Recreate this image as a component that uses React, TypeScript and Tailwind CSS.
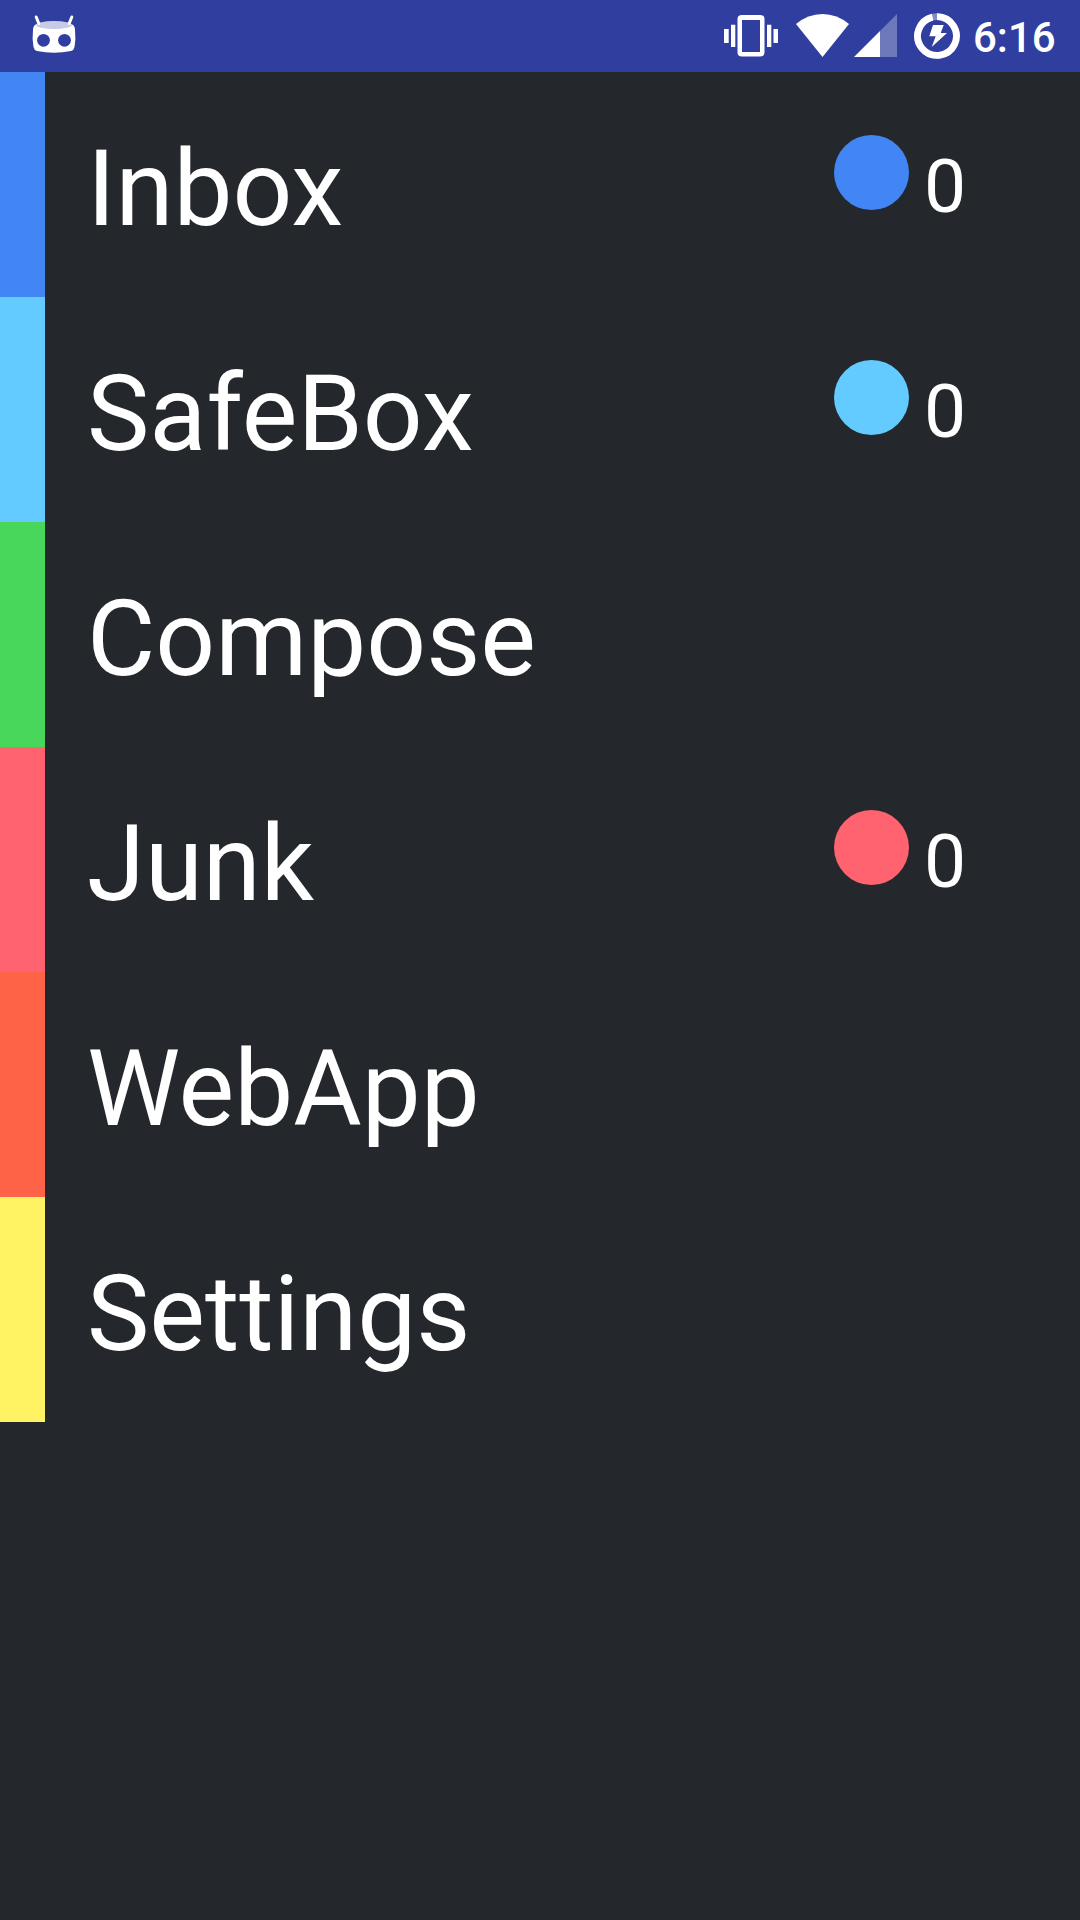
const items = [
  { label: 'Inbox', bar: 'bg-[#4285f4]', count: 0 },
  { label: 'SafeBox', bar: 'bg-[#63cbff]', count: 0 },
  { label: 'Compose', bar: 'bg-[#48d75b]' },
  { label: 'Junk', bar: 'bg-[#ff6370]', count: 0 },
  { label: 'WebApp', bar: 'bg-[#ff6347]' },
  { label: 'Settings', bar: 'bg-[#fff263]' },
];

function RobotIcon() {
  return (
    <svg width="46" height="72" viewBox="31 0 46 72">
      <path d="M33 30Q33 25 37 24Q54 19 71 24Q75 25 75 30Q76 39 74.500 47Q74 50 71 51Q54 54.500 37 51Q34 50 33.500 47Q32 39 33 30Z" fill="white" />
      <ellipse cx="54" cy="25" rx="18" ry="4" fill="#c8cbe5" />
      <path d="M36.200 17L38.800 23.500M71.800 17L69.200 23.500" stroke="white" strokeWidth="3" strokeLinecap="round" />
      <circle cx="43.500" cy="40.300" r="6.400" fill="#303f9f" />
      <circle cx="64.500" cy="40.300" r="6.400" fill="#303f9f" />
    </svg>
  );
}

function VibrateIcon() {
  return (
    <svg width="54" height="72" viewBox="724 0 54 72" fill="white">
      <path fillRule="evenodd" d="M742 15H760.500Q764.500 15 764.500 19V52.500Q764.500 56.500 760.500 56.500H742Q737.500 56.500 737.500 52.500V19Q737.500 15 742 15ZM742 20V52H760V20Z" />
      <path d="M724 29h4.700v14H724zM731 24.700h4.300v22.300H731zM767 24.700h4.300v22.300H767zM773.500 29h4.500v14h-4.500z" />
    </svg>
  );
}

function WifiIcon() {
  return (
    <svg width="54" height="72" viewBox="796 0 54 72" fill="white">
      <path d="M796 24Q808 14 822.500 14T849 24L822.500 57Z" />
    </svg>
  );
}

function SignalIcon() {
  return (
    <svg width="44" height="72" viewBox="854 0 44 72" fill="white">
      <path d="M897 14V57H880V31Z" fillOpacity=".3" />
      <path d="M880 31V57H854Z" />
    </svg>
  );
}

function BatteryIcon() {
  return (
    <svg width="46" height="72" viewBox="914 0 46 72">
      <circle cx="937" cy="36" r="19.400" fill="none" stroke="white" strokeOpacity=".4" strokeWidth="6.800" />
      <path d="M937 16.600A19.400 19.400 0 1 1 932.600 17.100" fill="none" stroke="white" strokeWidth="6.800" />
      <path d="M933 25H943.700L940.700 33H947L931.700 47L935.700 36.300H929.300Z" fill="white" />
    </svg>
  );
}

function StatusBar() {
  return (
    <header className="flex h-[72px] bg-[#303f9f] pl-[31px]">
      <RobotIcon />
      <div className="ml-[647px] flex">
        <VibrateIcon />
        <div className="ml-[18px] flex gap-1">
          <WifiIcon />
          <SignalIcon />
        </div>
        <div className="ml-4">
          <BatteryIcon />
        </div>
        <div className="ml-[13px] text-[42px] leading-[76px] font-medium">6:16</div>
      </div>
    </header>
  );
}

export default function App() {
  return (
    <div className="h-[1920px] w-[1080px] overflow-hidden bg-[#24272c] font-[Roboto,sans-serif] text-white">
      <StatusBar />
      <nav>
        {items.map((it) => (
          <div key={it.label} className="flex h-[225px]">
            <div className={`w-[45px] ${it.bar}`} />
            <div className="w-[789px] pt-[56px] pl-[42px] text-[105px] leading-[123px]">{it.label}</div>
            {it.count !== undefined && (
              <div className="flex">
                <div className={`mt-[63px] size-[75px] rounded-full ${it.bar}`} />
                <div className="mt-[70px] ml-[15px] text-[75px] leading-[88px]">{it.count}</div>
              </div>
            )}
          </div>
        ))}
      </nav>
    </div>
  );
}
